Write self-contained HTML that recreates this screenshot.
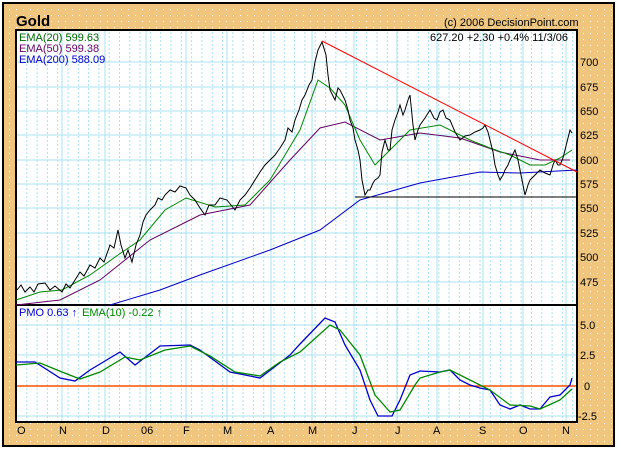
<!DOCTYPE html><html><head><style>body{margin:0;background:#fff}svg{display:block}text{font-family:"Liberation Sans",sans-serif;font-size:11px}</style></head><body>
<svg width="618" height="450" xmlns="http://www.w3.org/2000/svg">
<defs><pattern id="d" width="7" height="6" patternUnits="userSpaceOnUse"><rect width="7" height="6" fill="#f0c67e"/><rect x="2" y="3" width="1" height="1" fill="#fff"/></pattern>
<pattern id="w" x="16" width="10.3" height="4" patternUnits="userSpaceOnUse"><rect x="0" y="0" width="1" height="2" fill="#a8e0f0"/></pattern></defs>
<rect width="618" height="450" fill="#fff"/>
<rect x="3" y="3" width="611" height="443" fill="url(#d)" stroke="#000" stroke-width="2"/>
<text x="16" y="26" style="font-size:15px;font-weight:bold">Gold</text>
<text x="444" y="26">(c) 2006 DecisionPoint.com</text>
<rect x="16" y="30" width="561" height="392" fill="#fff"/>
<rect x="16" y="30" width="561" height="392" fill="url(#w)"/>
<g stroke="#a8e0f0" stroke-width="1">
<path d="M62 30V422M105 30V422M146 30V422M186 30V422M227 30V422M271 30V422M312 30V422M354 30V422M397 30V422M437 30V422M483 30V422M523 30V422M566 30V422"/>
<path d="M16 62H577M16 87H577M16 111H577M16 135H577M16 160H577M16 184H577M16 208H577M16 233H577M16 257H577M16 282H577M16 325H577M16 355H577M16 416H577"/>
</g>
<path d="M16 386H577" stroke="#ff5000" stroke-width="1.5"/>
<rect x="16" y="30" width="561" height="392" fill="none" stroke="#000" stroke-width="2"/>
<path d="M16 305H577" stroke="#000" stroke-width="2"/>
<g fill="none" stroke-width="1">
<path stroke="#00c" d="M110 305 160 290 200 275 270 250 320 230 360 200 420 183 480 172 520 173 577 170"/>
<path stroke="#606" d="M16 305 60 300 100 280 150 240 200 215 250 205 290 160 320 128 345 122 380 140 420 133 460 138 500 152 540 160 570 160"/>
<path stroke="#080" d="M16 300 40 292 62 290 90 275 118 255 140 240 165 210 186 198 215 207 245 205 270 180 300 130 318 80 330 88 345 105 360 140 375 165 390 150 410 130 440 125 470 140 490 148 510 155 530 165 545 165 560 158 572 150"/>
<path stroke="#000" d="M17 290 21 285 25 292 30 287 34 292 38 284 45 283 50 290 55 286 62 292 66 284 70 288 75 280 80 272 84 276 90 265 95 268 100 258 104 262 110 245 114 248 118 230 121 245 125 258 128 250 132 262 136 245 140 235 143 222 146 215 150 210 155 205 158 198 162 200 165 195 170 190 175 192 180 186 186 188 190 195 195 200 200 208 205 215 209 205 215 205 220 198 227 200 231 205 235 210 240 200 245 195 250 188 255 180 260 172 265 165 270 160 275 155 280 148 285 140 288 128 292 132 295 120 299 110 302 100 305 95 309 85 312 80 315 62 318 50 322 42 326 55 328 75 330 90 333 96 335 100 338 88 340 90 343 96 345 100 348 110 350 120 353 128 355 140 358 150 360 160 362 180 365 195 368 190 370 190 373 183 375 180 378 178 380 175 382 152 385 140 388 150 390 150 392 130 395 120 398 112 400 105 403 115 405 110 408 100 410 95 413 125 415 140 418 130 420 125 425 118 430 110 434 118 437 120 440 112 443 110 446 118 450 120 455 132 460 140 465 136 470 135 475 132 480 130 483 128 485 125 488 132 490 140 493 152 495 165 498 175 500 180 503 175 505 170 508 165 510 160 513 154 515 150 518 160 520 170 523 185 525 195 528 185 530 180 535 175 540 170 545 173 550 175 553 165 555 160 558 165 560 165 563 158 565 150 567 142 570 130 572 133"/>
<path stroke="#f00" d="M322 41 577 172"/>
<path stroke="#000" d="M355 197H577"/>
<path stroke="#00c" stroke-width="1.3" d="M16 362 35 362 60 378 75 381 90 370 120 352 135 365 160 346 190 345 200 350 230 372 260 378 290 355 300 344 325 318 335 322 345 345 360 370 370 400 378 416 392 416 400 400 410 375 420 371 440 372 450 370 460 380 470 385 480 388 490 390 500 405 510 409 520 405 530 409 540 409 550 397 560 395 570 385 572 378"/>
<path stroke="#080" stroke-width="1.3" d="M16 365 40 363 62 372 80 379 100 372 125 357 140 360 165 350 190 346 210 356 235 372 260 376 280 362 300 352 330 325 340 330 360 355 375 395 390 412 400 410 415 385 420 378 440 372 450 370 470 380 480 385 490 390 510 405 530 406 540 409 560 400 572 389"/>
</g>
<g font-size="11">
<text x="19" y="41" fill="#060">EMA(20) 599.63</text>
<text x="19" y="52" fill="#606">EMA(50) 599.38</text>
<text x="19" y="63" fill="#00c">EMA(200) 588.09</text>
<text x="430" y="41">627.20  +2.30  +0.4%  11/3/06</text>
<text x="19" y="316" fill="#00c">PMO  0.63 ↑</text><text x="82" y="316" fill="#080">EMA(10)  -0.22 ↑</text>
</g>
<g>
<text x="580" y="66">700</text><text x="580" y="91">675</text><text x="580" y="115">650</text><text x="580" y="139">625</text><text x="580" y="164">600</text><text x="580" y="188">575</text><text x="580" y="212">550</text><text x="580" y="237">525</text><text x="580" y="261">500</text><text x="580" y="286">475</text>
<text x="580" y="329">5.0</text><text x="580" y="359">2.5</text><text x="584" y="390">0</text><text x="578" y="420">-2.5</text>
<text x="17" y="434">O</text><text x="59" y="434">N</text><text x="102" y="434">D</text><text x="141" y="434">06</text><text x="183" y="434">F</text><text x="223" y="434">M</text><text x="267" y="434">A</text><text x="308" y="434">M</text><text x="352" y="434">J</text><text x="395" y="434">J</text><text x="433" y="434">A</text><text x="479" y="434">S</text><text x="519" y="434">O</text><text x="562" y="434">N</text>
</g>
</svg></body></html>
